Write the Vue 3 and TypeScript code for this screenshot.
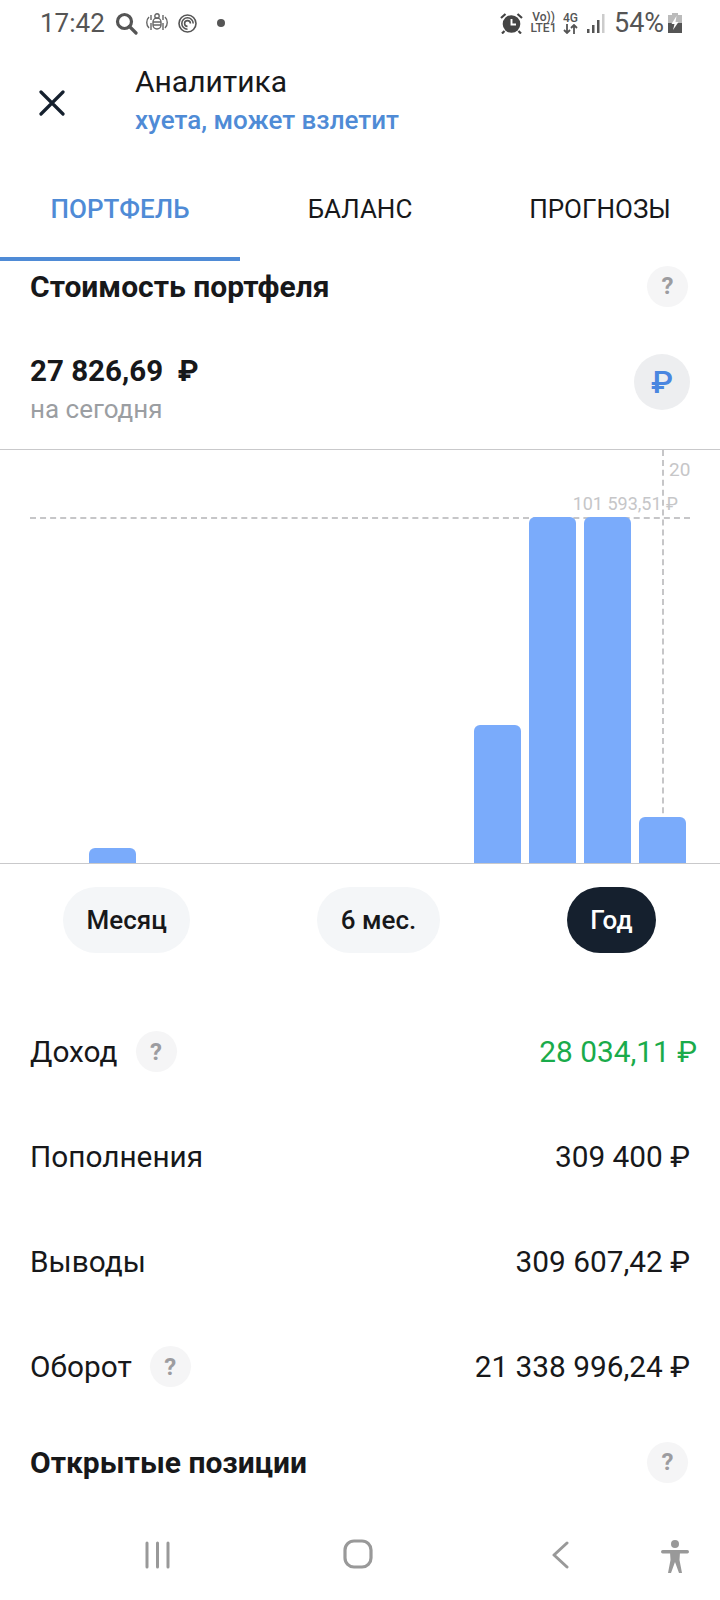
<script setup lang="ts">
interface Row {
  label: string
  value: string
  help?: boolean
  positive?: boolean
}

const tabs = ['ПОРТФЕЛЬ', 'БАЛАНС', 'ПРОГНОЗЫ']
const periods = ['Месяц', '6 мес.', 'Год']
const bars = [0, 15, 0, 0, 0, 0, 0, 0, 138, 346, 346, 46]

const rows: Row[] = [
  { label: 'Доход', value: '28 034,11 ₽', help: true, positive: true },
  { label: 'Пополнения', value: '309 400 ₽' },
  { label: 'Выводы', value: '309 607,42 ₽' },
  { label: 'Оборот', value: '21 338 996,24 ₽', help: true }
]
</script>

<template>
  <div class="screen">
    <div class="status">
      <span class="clock">17:42</span>
      <svg class="st-search" width="23" height="23" viewBox="0 0 23 23" fill="none" stroke="#555" stroke-width="3.2">
        <circle cx="9.500" cy="9.500" r="7" />
        <path d="M14.500 14.500l6.500 6.500" stroke-linecap="round" />
      </svg>
      <svg class="st-bug" width="22" height="20" viewBox="0 0 22 20" fill="none" stroke="#666" stroke-width="1.4">
        <rect x="7" y="5" width="8" height="11" rx="4" />
        <circle cx="11" cy="3" r="2.200" />
        <path d="M5 2v5M17 2v5M3 4C0 7 0 12 3 15M19 4c3 3 3 8 0 11M7 9h8M7 12h8M5 10v7M17 10v7" />
      </svg>
      <svg class="st-spiral" width="19" height="19" viewBox="0 0 19 19" fill="none" stroke="#555" stroke-width="1.6">
        <circle cx="9.500" cy="9.500" r="8.500" />
        <path d="M9.500 15.200A5.700 5.700 0 1 1 15.200 9.500M9.500 12.400A2.900 2.900 0 1 1 12.400 9.500" />
      </svg>
      <span class="st-dot"></span>
      <svg class="st-alarm" width="23" height="22" viewBox="0 0 23 22">
        <circle cx="11.500" cy="12" r="8.800" fill="#444" />
        <path d="M11.500 7v5.500H16" fill="none" stroke="#fff" stroke-width="1.900" />
        <path d="M1 6l4.500-4M22 6l-4.500-4M4.500 19l-2.500 2.500M18.500 19l2.500 2.500" stroke="#444" stroke-width="2.200" />
      </svg>
      <div class="st-volte">
        <span>Vo))</span>
        <span>LTE1</span>
      </div>
      <div class="st-net">
        <span>4G</span>
        <svg width="15" height="10" viewBox="0 0 15 10" fill="none" stroke="#555" stroke-width="1.8">
          <path d="M4 0v9M1 6l3 3 3-3M11 10V1M8 4l3-3 3 3" />
        </svg>
      </div>
      <svg class="st-signal" width="18" height="19" viewBox="0 0 18 19">
        <rect x="0" y="15" width="2.500" height="4" fill="#555" />
        <rect x="5" y="11" width="2.500" height="8" fill="#555" />
        <rect x="10" y="6" width="2.500" height="13" fill="#555" />
        <rect x="15" y="0" width="2.500" height="19" fill="#ccc" />
      </svg>
      <span class="st-percent">54%</span>
      <svg class="st-battery" width="14" height="20" viewBox="0 0 14 20">
        <path d="M4 0h6v2h4v8H0V2h4z" fill="#bbb" />
        <rect x="0" y="10" width="14" height="10" fill="#555" />
        <path d="M8.500 3L3.500 11h3l-1.500 6 5.500-8H7.500z" fill="#fff" />
      </svg>
    </div>

    <header class="header">
      <svg class="close" width="26" height="26" viewBox="0 0 26 26" fill="none" stroke="#15202e" stroke-width="3.2" stroke-linecap="round">
        <path d="M2 2l22 22M24 2L2 24" />
      </svg>
      <div class="heading">
        <div class="title">Аналитика</div>
        <div class="subtitle">хуета, может взлетит</div>
      </div>
    </header>

    <nav class="tabs">
      <div v-for="(tab, i) in tabs" :key="tab" class="tab" :class="{ active: i === 0 }">{{ tab }}</div>
    </nav>

    <div class="section-head">
      <h2>Стоимость портфеля</h2>
      <span class="help">?</span>
    </div>

    <div class="amount">
      <div>
        <div class="amount-value">27 826,69&nbsp; ₽</div>
        <div class="amount-note">на сегодня</div>
      </div>
      <span class="currency">₽</span>
    </div>

    <div class="chart">
      <div class="guide-h"></div>
      <div class="guide-v"></div>
      <span class="chart-date">20</span>
      <span class="chart-max">101 593,51 ₽</span>
      <div class="bars">
        <div v-for="(h, i) in bars" :key="i" class="bar" :style="{ height: h + 'px' }"></div>
      </div>
    </div>

    <div class="periods">
      <div v-for="(p, i) in periods" :key="p" class="pill" :class="{ selected: i === 2 }">{{ p }}</div>
    </div>

    <div class="rows">
      <div v-for="row in rows" :key="row.label" class="row">
        <div class="row-label">
          {{ row.label }}
          <span v-if="row.help" class="help">?</span>
        </div>
        <div class="row-value" :class="{ positive: row.positive }">{{ row.value }}</div>
      </div>
    </div>

    <div class="section-head open">
      <h2>Открытые позиции</h2>
      <span class="help">?</span>
    </div>

    <div class="navbar">
      <svg class="nav-recent" width="25" height="28" viewBox="0 0 25 28" stroke="#999" stroke-width="3" stroke-linecap="round">
        <path d="M2 2v24M12.500 2v24M23 2v24" />
      </svg>
      <svg class="nav-home" width="30" height="30" viewBox="0 0 30 30" fill="none" stroke="#999" stroke-width="3.200">
        <rect x="2" y="2" width="26" height="26" rx="9" />
      </svg>
      <svg class="nav-back" width="17" height="28" viewBox="0 0 17 28" fill="none" stroke="#999" stroke-width="3" stroke-linecap="round" stroke-linejoin="round">
        <path d="M15 2L2 14l13 12" />
      </svg>
      <svg class="nav-access" width="28" height="34" viewBox="0 0 28 34" fill="#999">
        <circle cx="14" cy="4" r="4" />
        <rect x="0" y="10" width="28" height="3.400" rx="1.700" />
        <path d="M9 12h10l-.5 8 2.500 13h-3l-4-11-4 11H7l2.500-13z" />
      </svg>
    </div>
  </div>
</template>

<style>
body {
  background: #fff;
}
</style>

<style scoped>
.screen {
  width: 720px;
  height: 1600px;
  overflow: hidden;
  background: #fff;
  color: #17181a;
  font-family: Roboto, "Liberation Sans", sans-serif;
}

.status {
  height: 46px;
  display: flex;
  align-items: center;
  padding-left: 40px;
  color: #555;
}

.clock {
  width: 75px;
  font-size: 26px;
}

.st-bug { margin-left: 8px; }
.st-spiral { margin-left: 10px; }

.st-dot {
  width: 8px;
  height: 8px;
  margin-left: 20px;
  border-radius: 50%;
  background: #555;
}

.st-alarm { margin-left: 275px; }

.st-volte {
  display: flex;
  flex-direction: column;
  align-items: center;
  width: 27px;
  margin-left: 7px;
  font-size: 12px;
  font-weight: 500;
  line-height: 11px;
}

.st-net {
  display: flex;
  flex-direction: column;
  align-items: center;
  width: 15px;
  margin-left: 6px;
  font-size: 12px;
  font-weight: 500;
  line-height: 11px;
}

.st-signal { margin-left: 9px; }

.st-percent {
  margin-left: 9px;
  font-size: 27px;
}

.st-battery { margin-left: 4px; }

.header {
  height: 112px;
  display: flex;
  align-items: center;
}

.close {
  margin-left: 39px;
  margin-top: 2px;
}

.heading {
  margin-left: 70px;
  margin-top: -5px;
}

.title {
  font-size: 30px;
  line-height: 36px;
}

.subtitle {
  margin-top: 4px;
  font-size: 26px;
  font-weight: 500;
  line-height: 32px;
  color: #4f8bd6;
}

.tabs {
  height: 103px;
  display: grid;
  grid-template-columns: repeat(3, 240px);
}

.tab {
  display: flex;
  align-items: center;
  justify-content: center;
  padding-bottom: 1px;
  font-size: 26px;
}

.tab.active {
  color: #4f8bd6;
  font-weight: 500;
  border-bottom: 4px solid #4f8bd6;
  padding-top: 3px;
  padding-bottom: 0;
}

.section-head {
  height: 50px;
  display: flex;
  align-items: center;
  justify-content: space-between;
  padding: 0 32px 0 30px;
}

.section-head h2 {
  margin: 0;
  font-size: 30px;
  font-weight: 700;
}

.help {
  width: 41px;
  height: 41px;
  display: inline-flex;
  align-items: center;
  justify-content: center;
  flex-shrink: 0;
  border-radius: 50%;
  background: #f5f5f6;
  color: #9c9ca0;
  font-size: 24px;
  font-weight: 700;
}

.amount {
  height: 138px;
  box-sizing: border-box;
  padding: 43px 30px 0;
  display: flex;
  justify-content: space-between;
  align-items: flex-start;
}

.amount-value {
  font-size: 29.5px;
  font-weight: 700;
  line-height: 34px;
}

.amount-note {
  margin-top: 4px;
  font-size: 26px;
  line-height: 34px;
  color: #9b9ea2;
}

.currency {
  width: 56px;
  height: 56px;
  display: flex;
  align-items: center;
  justify-content: center;
  border-radius: 50%;
  background: #edeef0;
  color: #4a86e0;
  font-size: 32px;
  font-weight: 500;
}

.chart {
  position: relative;
  height: 415px;
  box-sizing: border-box;
  border-top: 1px solid #c9c9cb;
  border-bottom: 1px solid #c9c9cb;
}

.bars {
  position: relative;
  height: 100%;
  display: flex;
  align-items: flex-end;
  gap: 8px;
  padding-left: 34px;
}

.bar {
  width: 47px;
  border-radius: 6px 6px 0 0;
  background: #7aabfb;
}

.guide-h {
  position: absolute;
  left: 30px;
  right: 30px;
  top: 67px;
  border-top: 2px dashed #c6c6c8;
}

.guide-v {
  position: absolute;
  left: 662px;
  top: 0;
  bottom: 0;
  border-left: 2px dashed #c6c6c8;
}

.chart-date,
.chart-max {
  position: absolute;
  color: #c6c6c8;
  line-height: 22px;
}

.chart-date {
  left: 669px;
  top: 9px;
  font-size: 19px;
}

.chart-max {
  right: 42px;
  top: 43px;
  font-size: 18px;
}

.periods {
  display: flex;
  justify-content: space-between;
  padding: 0 64px 0 63px;
  margin-top: 23px;
}

.pill {
  height: 66px;
  display: flex;
  align-items: center;
  padding: 0 23.5px;
  border-radius: 33px;
  background: #f4f6f8;
  font-size: 26px;
  font-weight: 500;
}

.pill.selected {
  background: #15202e;
  color: #fff;
}

.rows {
  margin-top: 46px;
}

.row {
  height: 105px;
  display: flex;
  align-items: center;
  justify-content: space-between;
  padding: 0 30px;
  font-size: 29.8px;
}

.row-label {
  display: flex;
  align-items: center;
  gap: 18px;
}

.row-value.positive {
  margin-right: -7px;
  color: #1aab4b;
}

.section-head.open {
  height: 86px;
}

.navbar {
  display: flex;
  align-items: flex-start;
  padding: 36px 0 0 145px;
}

.nav-home { margin-left: 173px; margin-top: -2px; }
.nav-back { margin-left: 179px; }
.nav-access { margin-left: 92px; margin-top: -1px; }
</style>
